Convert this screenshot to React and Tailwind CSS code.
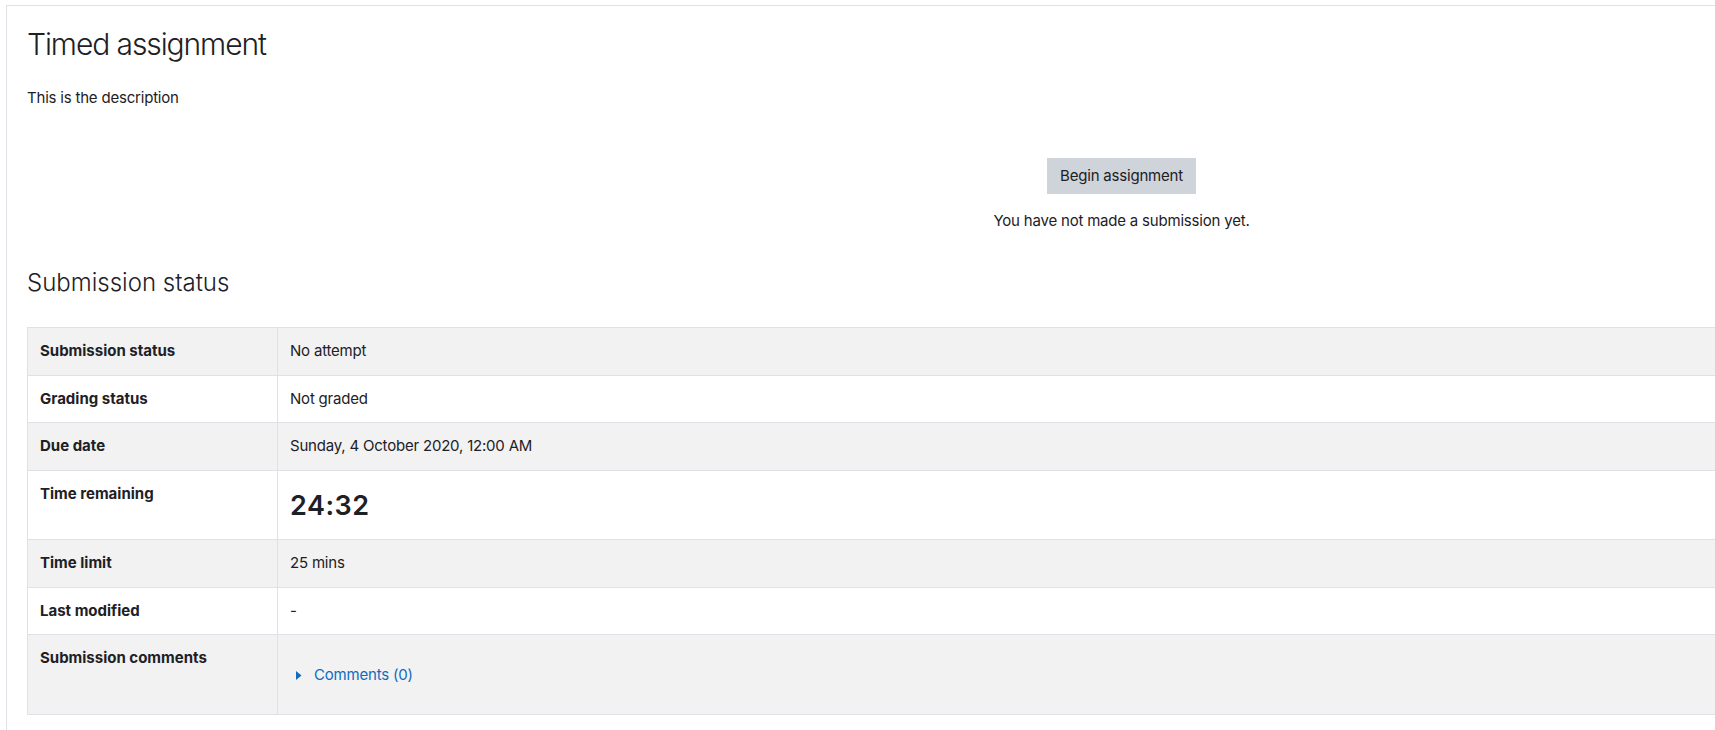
const rows = [
    { label: 'Submission status', value: 'No attempt' },
    { label: 'Grading status', value: 'Not graded' },
    { label: 'Due date', value: 'Sunday, 4 October 2020, 12:00 AM' },
    { label: 'Time remaining', value: 'timer' },
    { label: 'Time limit', value: '25 mins' },
    { label: 'Last modified', value: '-' },
    { label: 'Submission comments', value: 'comments' },
];

function Value({ value }) {
    if (value === 'timer') {
        return <h3 className="text-[27px] font-semibold leading-[1.2] mt-[7px] mb-[5px] tracking-[0.5px]">24:32</h3>;
    }
    if (value === 'comments') {
        return (
            <div className="pt-[17px] pb-[15px] flex items-center">
                <a href="#" className="flex items-center text-[#0f6cbf]">
                    <svg width="6" height="9" viewBox="0 0 6 9" className="ml-[6px] mr-[12px]">
                        <path d="M0 0 L5.5 4.5 L0 9 Z" fill="currentColor" />
                    </svg>
                    Comments (0)
                </a>
            </div>
        );
    }
    return <span>{value}</span>;
}

export default function App() {
    return (
        <div className="w-full h-[730px] overflow-hidden bg-white text-[#1d2125] font-['Inter',sans-serif] text-[15px] leading-[1.5]">
            <div className="ml-[6px] mt-[5px] w-[2230px] min-h-[760px] border-l border-t border-[#dee2e6] p-5">
                <h2 className="text-[30px] font-light leading-[1.2] mb-[25px] tracking-[-1.1px]">Timed assignment</h2>
                <p className="tracking-[-0.2px]">This is the description</p>

                <div className="flex flex-col items-center mt-[48px] tracking-[-0.2px]">
                    <button className="bg-[#ced4da] border border-transparent px-3 py-[6px] text-[15px] leading-[1.5] text-[#1d2125]">
                        Begin assignment
                    </button>
                    <p className="mt-[16px]">You have not made a submission yet.</p>
                </div>

                <h3 className="text-[24px] font-light leading-[1.2] mt-[36px] mb-[30px]">Submission status</h3>

                <table className="w-full border-collapse">
                    <tbody>
                        {rows.map((r, i) => (
                            <tr key={r.label} className={i % 2 === 0 ? 'bg-[#f2f2f2]' : 'bg-white'}>
                                <th className="w-[250px] border border-[#dee2e6] p-3 text-left align-top font-bold">
                                    {r.label}
                                </th>
                                <td className="border border-[#dee2e6] p-3 align-top tracking-[-0.2px]">
                                    <Value value={r.value} />
                                </td>
                            </tr>
                        ))}
                    </tbody>
                </table>
            </div>
        </div>
    );
}
